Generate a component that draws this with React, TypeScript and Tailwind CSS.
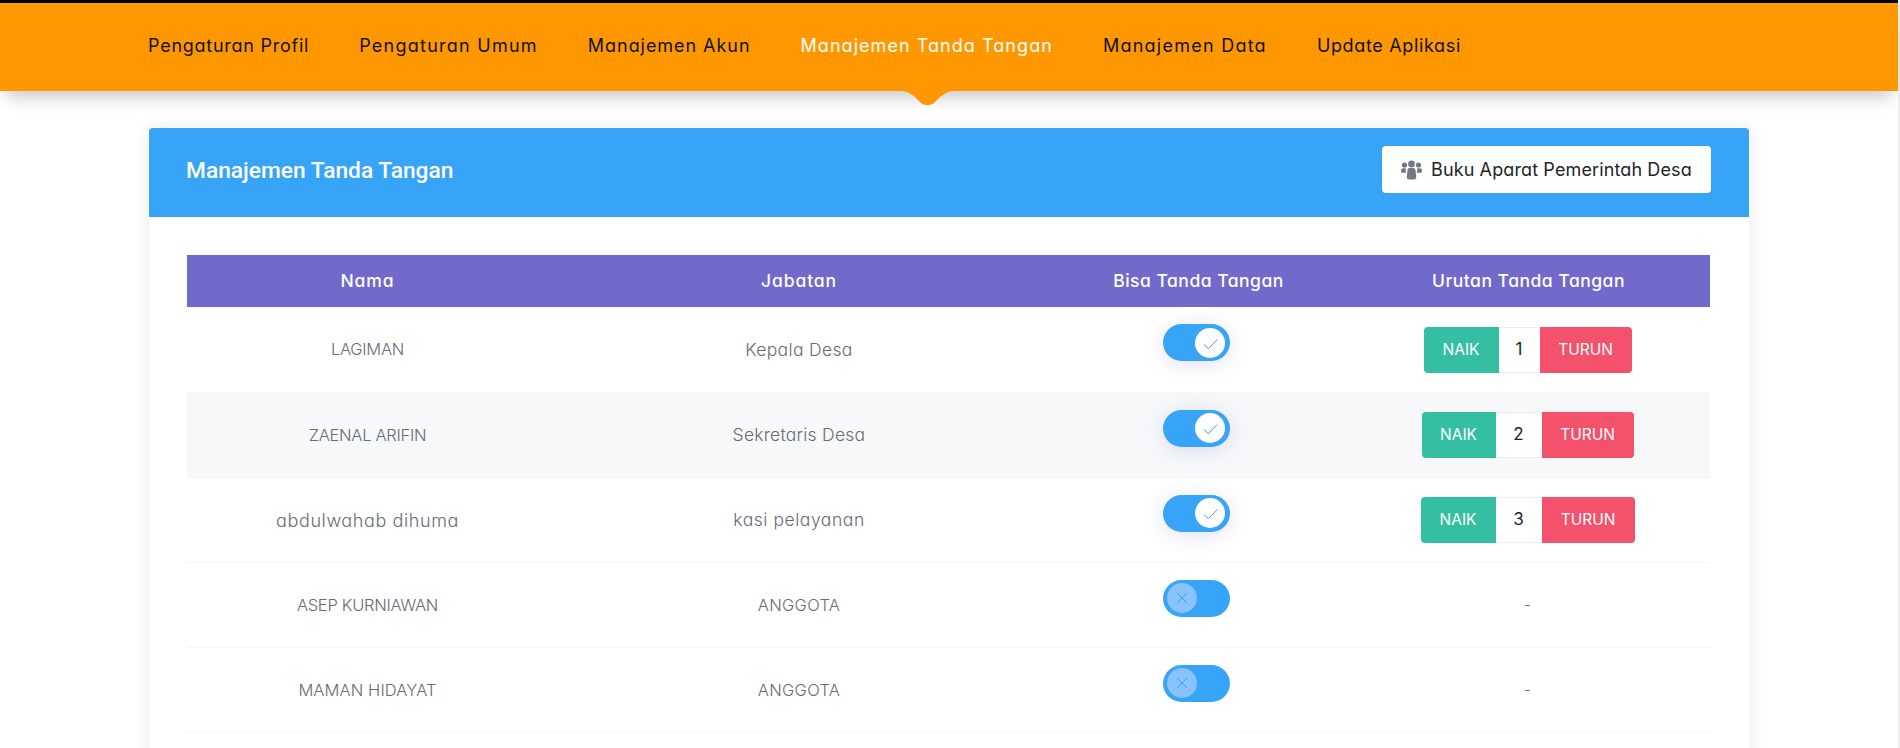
import React from "react";

const navItems = [
  { label: "Pengaturan Profil", cls: "tracking-[0.75px]" },
  { label: "Pengaturan Umum", cls: "tracking-[1.25px]" },
  { label: "Manajemen Akun", cls: "tracking-[0.95px]" },
  { label: "Manajemen Tanda Tangan", cls: "tracking-[1.05px] text-white" },
  { label: "Manajemen Data", cls: "tracking-[1.25px]" },
  { label: "Update Aplikasi", cls: "tracking-[0.65px]" },
];

type Row = {
  nama: string;
  namaCls: string;
  jabatan: string;
  jabatanCls: string;
  on: boolean;
  order?: { n: number; naik: string; mid: string; turun: string };
};

const caps = "text-[16.5px] tracking-[-0.3px]";

const rows: Row[] = [
  { nama: "LAGIMAN", namaCls: caps, jabatan: "Kepala Desa", jabatanCls: "text-[17.5px] tracking-[0.35px]", on: true, order: { n: 1, naik: "w-[75px]", mid: "w-[41px]", turun: "w-[92px]" } },
  { nama: "ZAENAL ARIFIN", namaCls: caps, jabatan: "Sekretaris Desa", jabatanCls: "text-[17.5px] tracking-[0.25px]", on: true, order: { n: 2, naik: "w-[74px]", mid: "w-[46px]", turun: "w-[92px]" } },
  { nama: "abdulwahab dihuma", namaCls: "text-[18px] tracking-[0.6px]", jabatan: "kasi pelayanan", jabatanCls: "text-[17.5px] tracking-[0.55px]", on: true, order: { n: 3, naik: "w-[75px]", mid: "w-[46px]", turun: "w-[93px]" } },
  { nama: "ASEP KURNIAWAN", namaCls: caps, jabatan: "ANGGOTA", jabatanCls: "text-[16.5px] tracking-[0.3px]", on: false },
  { nama: "MAMAN HIDAYAT", namaCls: "text-[16.5px] tracking-[0.1px]", jabatan: "ANGGOTA", jabatanCls: "text-[16.5px] tracking-[0.3px]", on: false },
];

function Toggle({ on }: { on: boolean }) {
  return (
    <span className={`mr-1 inline-flex h-[37px] w-[67px] items-center rounded-full bg-[#38a4f8] ${on ? "justify-end pr-[5px] shadow-[0_3px_20px_0_rgba(113,106,202,0.2)]" : "justify-start pl-1"}`}>
      <span className={`flex h-[30px] w-[30px] items-center justify-center rounded-full ${on ? "bg-white" : "bg-[#88c4fb]"}`}>
        <svg width="30" height="30" viewBox="0 0 30 30" fill="none">
          {on ? (
            <polyline points="9,16.5 13.3,20.7 22.3,11.5" stroke="#4f94e8" strokeWidth="1" />
          ) : (
            <path d="M10 10 L20 20 M20 10 L10 20" stroke="#38a4f8" strokeWidth="1" />
          )}
        </svg>
      </span>
    </span>
  );
}

function GroupIcon() {
  return (
    <svg width="21" height="20" viewBox="0 0 21 20" fill="#747784">
      <circle cx="3.5" cy="5" r="2.6" />
      <circle cx="17.5" cy="5" r="2.6" />
      <circle cx="10.5" cy="4" r="3.4" />
      <path d="M0 10.5C0 9 1 8.2 2.4 8.2H5C4.4 9.5 4.6 11 5.2 12.8H1.5C.6 12.8 0 12 0 11.2Z" />
      <path d="M21 10.5C21 9 20 8.2 18.6 8.2H16C16.6 9.5 16.4 11 15.8 12.8H19.5C20.4 12.8 21 12 21 11.2Z" />
      <path d="M6.5 10.2C6.5 8.8 7.4 8 8.6 8H12.4C13.6 8 14.5 8.8 14.5 10.2L15.2 17C15.3 18.6 14.4 19.5 13 19.5H8C6.6 19.5 5.7 18.6 5.8 17Z" />
    </svg>
  );
}

export default function App() {
  return (
    <div className="flex h-screen w-full overflow-hidden bg-white font-['Inter',sans-serif] [font-feature-settings:'cv11']">
      <div className="min-w-0 flex-1">
        <header className="relative z-10 border-t-[3px] border-black bg-[#ff9800] shadow-[0_12px_16px_-6px_rgba(0,0,0,0.22)]">
          <nav className="flex h-[88px] items-center gap-[50px] pb-[4px] pl-[148px] text-[18px] text-[#111111]">
            {navItems.map((item) => (
              <a key={item.label} className={item.cls}>
                {item.label}
              </a>
            ))}
          </nav>
          <svg className="absolute left-[902px] top-[88px]" width="51" height="15" viewBox="0 0 51 15" fill="#ff9800">
            <path d="M0 0H51C43 1 39 5 35 9C31 13.5 29 14 25.5 14C22 14 20 13.5 16 9C12 5 8 1 0 0Z" />
          </svg>
        </header>

        <main className="px-[149px] pt-[37px]">
          <section className="rounded-t-[4px] bg-white shadow-[0_0_15px_1px_rgba(69,65,78,0.1)]">
            <div className="flex h-[89px] items-center justify-between rounded-t-[4px] bg-[#38a4f8] pl-[37px] pr-[38px]">
              <h1 className="mb-[2px] font-['Roboto',sans-serif] text-[22.75px] font-medium text-white">Manajemen Tanda Tangan</h1>
              <button className="mb-[6px] flex h-[47px] w-[329px] items-center gap-[9px] rounded-[4px] bg-white pl-[19px] text-[18px] tracking-[0.12px] text-[#212529]">
                <GroupIcon />
                Buku Aparat Pemerintah Desa
              </button>
            </div>

            <div className="py-[38px] pl-[38px] pr-[39px]">
              <table className="w-full table-fixed border-collapse text-center">
                <colgroup>
                  <col className="w-[361px]" />
                  <col className="w-[502px]" />
                  <col className="w-[297px]" />
                  <col className="w-[363px]" />
                </colgroup>
                <thead>
                  <tr className="h-[52px] bg-[#716aca] text-[17.5px] text-white">
                    <th className="font-medium tracking-[0.9px]">Nama</th>
                    <th className="font-medium tracking-[0.9px]">Jabatan</th>
                    <th className="font-medium tracking-[0.5px]">Bisa Tanda Tangan</th>
                    <th className="font-medium tracking-[0.5px]">Urutan Tanda Tangan</th>
                  </tr>
                </thead>
                <tbody className="font-light text-[#686b76]">
                  {rows.map((r, i) => (
                    <tr key={r.nama} className={`h-[85px] border-b border-[#f4f5f8] ${i === 1 ? "bg-[#f7f8fa]" : "bg-white"}`}>
                      <td className={`pt-[1px] ${r.namaCls}`}>{r.nama}</td>
                      <td className={`pt-[1px] ${r.jabatanCls}`}>{r.jabatan}</td>
                      <td className="pt-[17px] align-top">
                        <Toggle on={r.on} />
                      </td>
                      <td className="pr-[2px] pt-[1px] text-[15px]">
                        {r.order ? (
                          <div className="flex h-[46px] items-stretch justify-center text-[15.5px] font-normal">
                            <span className={`flex items-center justify-center rounded-l-[4px] bg-[#34bfa3] text-white ${r.order.naik}`}>NAIK</span>
                            <span className={`flex items-center justify-center border-y border-[#ebedf2] bg-white text-[17px] text-[#212529] ${r.order.mid}`}>{r.order.n}</span>
                            <span className={`flex items-center justify-center rounded-r-[4px] bg-[#f4516c] text-white ${r.order.turun}`}>TURUN</span>
                          </div>
                        ) : (
                          "-"
                        )}
                      </td>
                    </tr>
                  ))}
                </tbody>
              </table>
            </div>
          </section>
        </main>
      </div>
      <div className="w-[2px] shrink-0 bg-[#f1f1f1]" />
    </div>
  );
}
